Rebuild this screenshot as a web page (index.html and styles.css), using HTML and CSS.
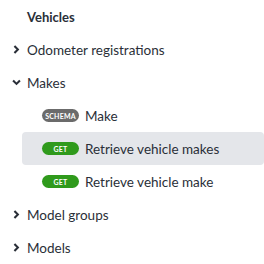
FILE: index.html
```html
<!DOCTYPE html>
<html lang="en">
<head>
    <meta charset="UTF-8">
    <meta name="viewport" content="width=device-width, initial-scale=1.0">
    <title>Vehicles</title>
    <link rel="stylesheet" href="styles.css">
</head>
<body>
    <nav class="sidebar">
        <div class="group-title">Vehicles</div>
        <div class="section">
            <svg class="chevron" viewBox="0 0 8 8"><path d="M2.5 1.5 L5 4 L2.5 6.5"/></svg>
            <span>Odometer registrations</span>
        </div>
        <div class="section">
            <svg class="chevron" viewBox="0 0 8 8"><path d="M1.5 2.5 L4 5 L6.5 2.5"/></svg>
            <span>Makes</span>
        </div>
        <div class="items">
            <div class="item">
                <span class="badge schema">SCHEMA</span>
                <span>Make</span>
            </div>
            <div class="item active">
                <span class="badge get">GET</span>
                <span>Retrieve vehicle makes</span>
            </div>
            <div class="item">
                <span class="badge get">GET</span>
                <span>Retrieve vehicle make</span>
            </div>
        </div>
        <div class="section">
            <svg class="chevron" viewBox="0 0 8 8"><path d="M2.5 1.5 L5 4 L2.5 6.5"/></svg>
            <span>Model groups</span>
        </div>
        <div class="section">
            <svg class="chevron" viewBox="0 0 8 8"><path d="M2.5 1.5 L5 4 L2.5 6.5"/></svg>
            <span>Models</span>
        </div>
    </nav>
</body>
</html>
```

FILE: styles.css
```css
body {
    margin: 0;
    background-color: #ffffff;
    font-family: 'Lato', 'Noto Sans', sans-serif;
    color: #2a2f38;
    font-size: 13.5px;
}

.sidebar {
    display: flex;
    flex-direction: column;
    padding-left: 11px;
}

.group-title {
    height: 33px;
    display: flex;
    align-items: center;
    padding-left: 16px;
    font-weight: bold;
    font-size: 13px;
}

.section {
    height: 33px;
    display: flex;
    align-items: center;
    gap: 5px;
}

.chevron {
    width: 11px;
    height: 11px;
    fill: none;
    stroke: #2a2f38;
    stroke-width: 1.5;
}

.items {
    display: flex;
    flex-direction: column;
    padding-left: 11px;
}

.item {
    height: 33px;
    display: flex;
    align-items: center;
    gap: 6px;
    padding-left: 20px;
    border-radius: 4px;
}

.item.active {
    background-color: #e4e6ea;
}

.badge {
    width: 37px;
    height: 13px;
    border-radius: 7px;
    color: #ffffff;
    font-size: 7px;
    font-weight: bold;
    display: flex;
    align-items: center;
    justify-content: center;
    letter-spacing: 0.2px;
}

.badge.get {
    background-color: #2f9a1c;
}

.badge.schema {
    background-color: #6b6b6b;
}
```
